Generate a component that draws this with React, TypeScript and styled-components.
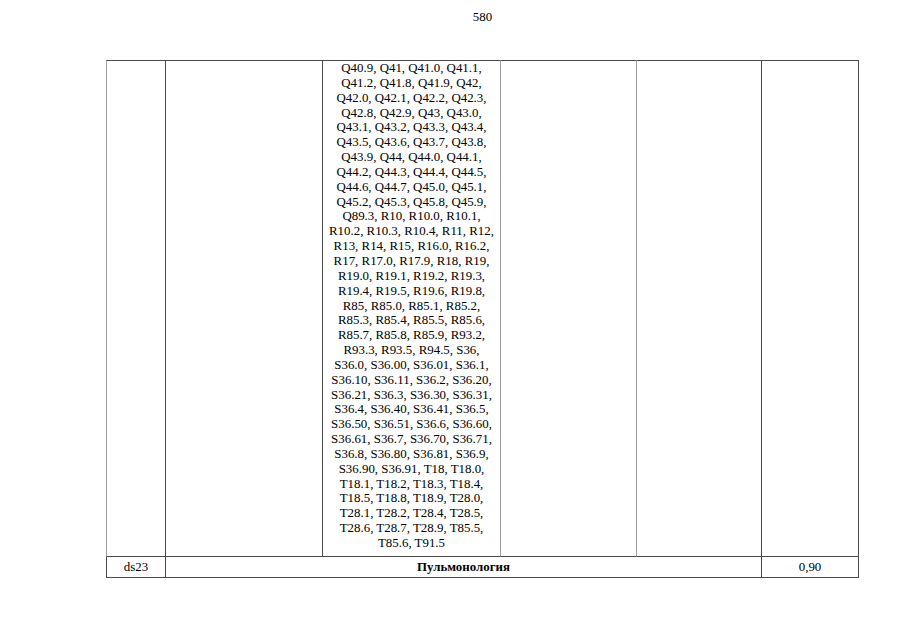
import React from "react";
import styled, { createGlobalStyle } from "styled-components";

const GlobalStyle = createGlobalStyle`
  html, body {
    margin: 0;
    padding: 0;
    background: #ffffff;
  }
  body {
    font-family: "Liberation Serif", "Times New Roman", serif;
    color: #000000;
  }
`;

const Page = styled.div`
  width: 905px;
  height: 640px;
  box-sizing: border-box;
  padding: 10px 0 0 106px;
  background: #ffffff;
`;

const Sheet = styled.div`
  width: 753px;
`;

const PageNumber = styled.div`
  text-align: center;
  font-size: 12.9px;
  line-height: 15px;
  height: 15px;
  margin-bottom: 35px;
`;

const Table = styled.table`
  table-layout: fixed;
  width: 753px;
  border-collapse: separate;
  border-spacing: 0;
  font-size: 12.9px;
  line-height: 14.85px;
`;

const Col = styled.col<{ $w: number }>`
  width: ${(p) => p.$w}px;
`;

const Cell = styled.td<{
  $top?: boolean;
  $left?: string;
  $right: string;
  $valign?: "top" | "middle";
  $bold?: boolean;
  $padTop?: number;
  $padBottom?: number;
}>`
  box-sizing: border-box;
  padding: ${(p) => p.$padTop ?? 0}px 0 ${(p) => p.$padBottom ?? 0}px 0;
  text-align: center;
  vertical-align: ${(p) => p.$valign ?? "top"};
  border-right: 1px solid ${(p) => p.$right};
  border-bottom: 1px solid #4a4a4a;
  border-top: ${(p) => (p.$top ? "1px solid #4a4a4a" : "none")};
  border-left: ${(p) => (p.$left ? `1px solid ${p.$left}` : "none")};
  font-weight: ${(p) => (p.$bold ? 700 : 400)};
`;

const CodeLine = styled.div`
  white-space: nowrap;
`;

const DARK = "#4a4a4a";
const LIGHT = "#a0a0a0";

const codeLines = [
  "Q40.9, Q41, Q41.0, Q41.1,",
  "Q41.2, Q41.8, Q41.9, Q42,",
  "Q42.0, Q42.1, Q42.2, Q42.3,",
  "Q42.8, Q42.9, Q43, Q43.0,",
  "Q43.1, Q43.2, Q43.3, Q43.4,",
  "Q43.5, Q43.6, Q43.7, Q43.8,",
  "Q43.9, Q44, Q44.0, Q44.1,",
  "Q44.2, Q44.3, Q44.4, Q44.5,",
  "Q44.6, Q44.7, Q45.0, Q45.1,",
  "Q45.2, Q45.3, Q45.8, Q45.9,",
  "Q89.3, R10, R10.0, R10.1,",
  "R10.2, R10.3, R10.4, R11, R12,",
  "R13, R14, R15, R16.0, R16.2,",
  "R17, R17.0, R17.9, R18, R19,",
  "R19.0, R19.1, R19.2, R19.3,",
  "R19.4, R19.5, R19.6, R19.8,",
  "R85, R85.0, R85.1, R85.2,",
  "R85.3, R85.4, R85.5, R85.6,",
  "R85.7, R85.8, R85.9, R93.2,",
  "R93.3, R93.5, R94.5, S36,",
  "S36.0, S36.00, S36.01, S36.1,",
  "S36.10, S36.11, S36.2, S36.20,",
  "S36.21, S36.3, S36.30, S36.31,",
  "S36.4, S36.40, S36.41, S36.5,",
  "S36.50, S36.51, S36.6, S36.60,",
  "S36.61, S36.7, S36.70, S36.71,",
  "S36.8, S36.80, S36.81, S36.9,",
  "S36.90, S36.91, T18, T18.0,",
  "T18.1, T18.2, T18.3, T18.4,",
  "T18.5, T18.8, T18.9, T28.0,",
  "T28.1, T28.2, T28.4, T28.5,",
  "T28.6, T28.7, T28.9, T85.5,",
  "T85.6, T91.5",
];

const widths = [60, 157, 178, 136, 125, 97];

export default function App() {
  return (
    <>
      <GlobalStyle />
      <Page>
        <Sheet>
          <PageNumber>580</PageNumber>
          <Table>
            <colgroup>
              {widths.map((w, i) => (
                <Col key={i} $w={w} />
              ))}
            </colgroup>
            <tbody>
              <tr>
                <Cell $top $left={LIGHT} $right={DARK} />
                <Cell $top $right={DARK} />
                <Cell $top $right={LIGHT} $padBottom={5}>
                  {codeLines.map((l, i) => (
                    <CodeLine key={i}>{l}</CodeLine>
                  ))}
                </Cell>
                <Cell $top $right={LIGHT} />
                <Cell $top $right={DARK} />
                <Cell $top $right={DARK} />
              </tr>
              <tr>
                <Cell $left={DARK} $right={DARK} $valign="middle" $padTop={3} $padBottom={2}>
                  ds23
                </Cell>
                <Cell colSpan={4} $right={DARK} $valign="middle" $bold $padTop={3} $padBottom={2}>
                  Пульмонология
                </Cell>
                <Cell $right={DARK} $valign="middle" $padTop={3} $padBottom={2}>
                  0,90
                </Cell>
              </tr>
            </tbody>
          </Table>
        </Sheet>
      </Page>
    </>
  );
}
